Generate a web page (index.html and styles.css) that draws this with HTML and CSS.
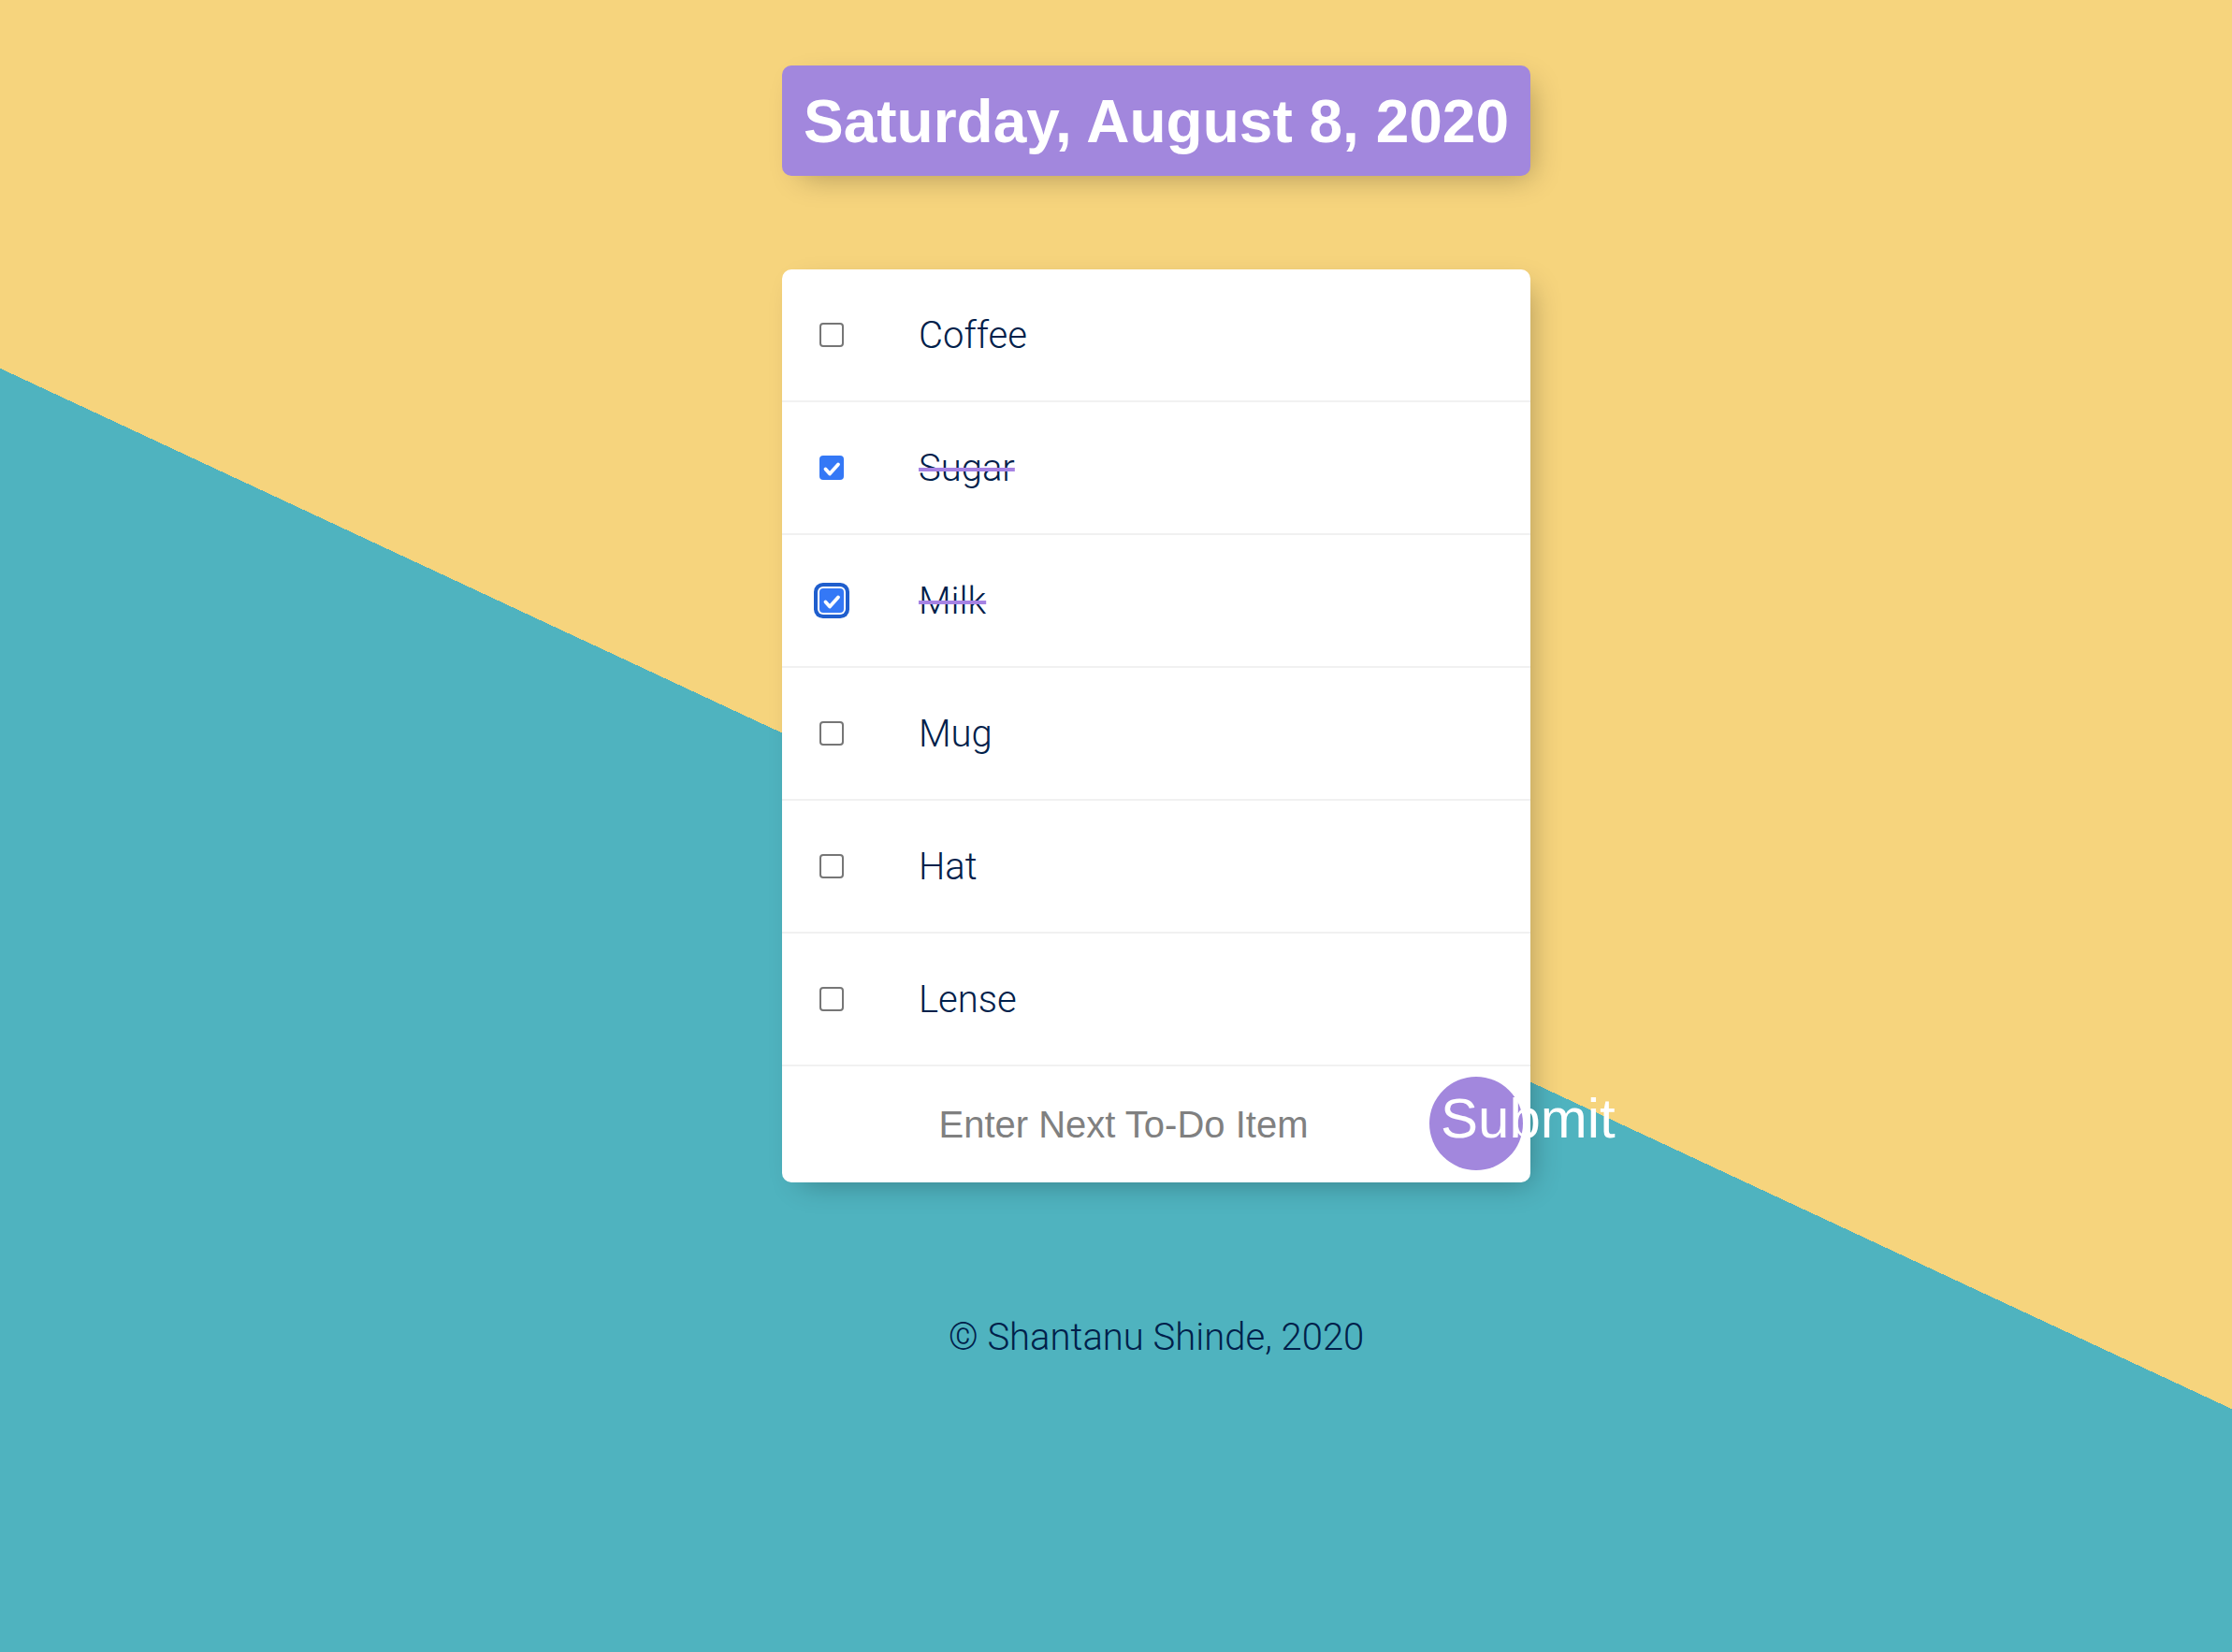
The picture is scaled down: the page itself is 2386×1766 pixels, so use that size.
FILE: index.html
```html
<!DOCTYPE html>
<html lang="en">
<head>
    <meta charset="UTF-8">
    <meta name="viewport" content="width=device-width, initial-scale=1.0">
    <title>To-Do List</title>
    <link rel="stylesheet" href="styles.css">
</head>
<body>

<div class="box" id="heading">
    <h1>Saturday, August 8, 2020</h1>
</div>

<div class="box list">
    <div class="item">
        <input type="checkbox" id="item1">
        <label class="check" for="item1"></label>
        <p>Coffee</p>
    </div>
    <div class="item">
        <input type="checkbox" id="item2" checked>
        <label class="check" for="item2">
            <svg viewBox="0 0 26 26"><polyline points="6.5,14.5 11,19.5 20,9.5"/></svg>
        </label>
        <p>Sugar</p>
    </div>
    <div class="item">
        <input type="checkbox" id="item3" checked>
        <label class="check focus" for="item3">
            <svg viewBox="0 0 26 26"><polyline points="6.5,14.5 11,19.5 20,9.5"/></svg>
        </label>
        <p>Milk</p>
    </div>
    <div class="item">
        <input type="checkbox" id="item4">
        <label class="check" for="item4"></label>
        <p>Mug</p>
    </div>
    <div class="item">
        <input type="checkbox" id="item5">
        <label class="check" for="item5"></label>
        <p>Hat</p>
    </div>
    <div class="item">
        <input type="checkbox" id="item6">
        <label class="check" for="item6"></label>
        <p>Lense</p>
    </div>

    <form class="item new-item" action="/" method="post">
        <input type="text" name="newItem" placeholder="Enter Next To-Do Item" autocomplete="off">
        <button type="submit" name="list" value="Today">Submit</button>
    </form>
</div>

<footer>© Shantanu Shinde, 2020</footer>

</body>
</html>
```
FILE: styles.css
```css
html {
    min-height: 100%;
}

body {
    margin: 0;
    padding: 0 0 0 86px;
    min-height: 1766px;
    box-sizing: border-box;
    font-family: 'Liberation Sans', Arial, sans-serif;
    background: linear-gradient(25deg, #4fb3bf 50%, #f6d47d 50%) 0 0 / 100% 1900px no-repeat, #4fb3bf;
}

.box {
    width: 800px;
    margin: 0 auto;
    background: white;
    border-radius: 10px;
    box-shadow: 10px 10px 30px -10px rgba(0, 0, 0, 0.3);
}

#heading {
    margin-top: 70px;
    background-color: #a287dd;
    text-align: center;
}

h1 {
    margin: 0;
    padding: 23px 0 21px;
    color: #fff;
    font-size: 64px;
    font-weight: bold;
    line-height: 74px;
}

.list {
    margin-top: 100px;
}

.item {
    min-height: 140px;
    display: flex;
    align-items: center;
    border-bottom: 2px solid #f1f1f1;
}

.item:last-child {
    border-bottom: 0;
}

.item input[type="checkbox"] {
    position: absolute;
    opacity: 0;
    width: 0;
    height: 0;
    margin: 0;
}

.check {
    width: 26px;
    height: 26px;
    margin: 0 40px;
    box-sizing: border-box;
    border: 2px solid #767676;
    border-radius: 4px;
    background: #fff;
    flex-shrink: 0;
}

.check svg {
    display: block;
    width: 26px;
    height: 26px;
}

.check polyline {
    fill: none;
    stroke: #fff;
    stroke-width: 3.8;
    stroke-linecap: round;
    stroke-linejoin: round;
}

input:checked + .check {
    border: none;
    background-color: #3478f6;
}

.check.focus {
    box-shadow: 0 0 0 2px #fff, 0 0 0 6px #1f5ecd;
    border-radius: 4px;
}

.item p {
    margin: 0;
    padding: 0 40px;
    font-family: Roboto, 'Liberation Sans', sans-serif;
    font-size: 40px;
    font-weight: 300;
    color: #00204a;
}

input:checked + .check + p {
    text-decoration: line-through;
    text-decoration-color: #a683e3;
    text-decoration-thickness: 4px;
}

.new-item {
    min-height: 124px;
    padding-left: 50px;
}

.new-item input[type="text"] {
    width: 630px;
    height: 120px;
    padding: 0;
    border: none;
    background: transparent;
    text-align: center;
    font-family: 'Liberation Sans', Arial, sans-serif;
    font-size: 40px;
    color: #00204a;
}

.new-item input[type="text"]:focus {
    outline: none;
    box-shadow: inset 0 -6px 0 0 #a683e3;
}

::placeholder {
    color: grey;
    opacity: 1;
}

button {
    width: 100px;
    height: 100px;
    margin-left: 12px;
    margin-top: -2px;
    padding: 0 12px 12px;
    border: 0;
    border-radius: 50%;
    background-color: #a287dd;
    color: #fff;
    font-family: 'Liberation Sans', Arial, sans-serif;
    font-size: 60px;
    text-align: left;
    white-space: nowrap;
    overflow: visible;
    flex-shrink: 0;
}

footer {
    margin-top: 142px;
    text-align: center;
    font-family: Roboto, 'Liberation Sans', sans-serif;
    font-size: 40px;
    font-weight: 300;
    color: #00204a;
}
```
